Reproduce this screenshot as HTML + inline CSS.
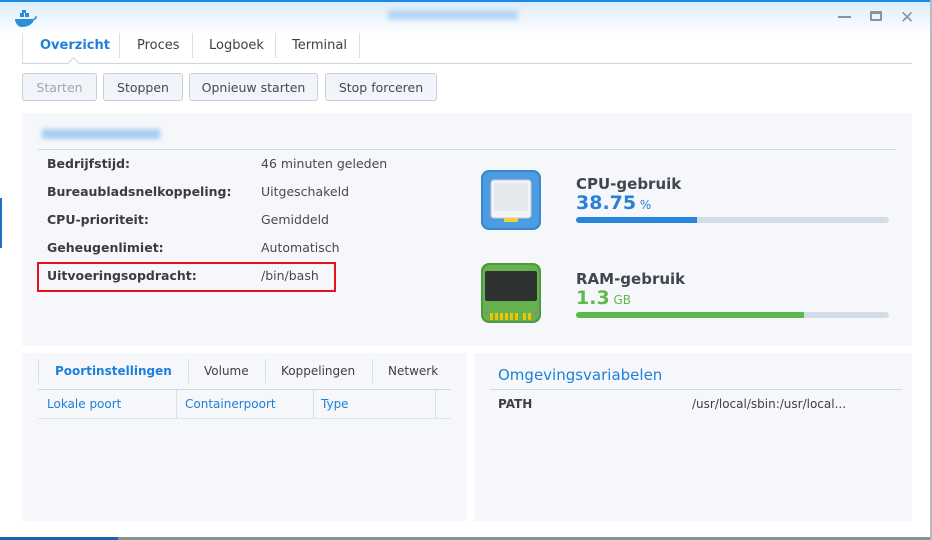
<!DOCTYPE html>
<html><head><meta charset="utf-8"><style>
*{margin:0;padding:0;box-sizing:border-box}
body{width:932px;height:540px;overflow:hidden;background:#fff;font-family:"DejaVu Sans","Liberation Sans",sans-serif;font-size:12px;color:#404040;position:relative}
.a{position:absolute;white-space:nowrap}
.title{left:0;top:0;width:932px;height:34px;background:linear-gradient(#dcecfb,#fff);border-top:2px solid #1a8ae6}
.btn{position:absolute;top:73px;height:28px;background:#f1f4f8;border:1px solid #c6d0da;border-radius:3px;text-align:center;line-height:28px;font-size:12.5px;color:#404a55}
.panel{position:absolute;background:#f5f7fb}
.lbl{font-weight:bold;font-size:12.5px;color:#3c3c3c}
.val{font-size:12.5px;color:#4a4a4a}
.sep{position:absolute;width:1px;background:#d9dfe6}
</style></head><body>
<div class="a title"></div>
<svg class="a" style="left:14px;top:10px" width="24" height="18" viewBox="0 0 24 18"><path d="M1 9h19c1-3 3-3 3-3 0 3-2 4-3 4-2 5-7 7-12 7C4 17 1 13 1 9z" fill="#2b8fd9"/><rect x="6" y="3" width="4" height="4" fill="#2b8fd9"/><rect x="11" y="3" width="4" height="4" fill="#2b8fd9"/><rect x="8" y="0" width="4" height="3" fill="#2b8fd9"/></svg>
<div class="a" style="left:388px;top:10px;width:130px;height:10px;background:#b8d6f5;filter:blur(2px)"></div>
<div class="a" style="left:838px;top:16px;width:13px;height:2px;background:#8b949c"></div>
<div class="a" style="left:870px;top:11px;width:12px;height:10px;border:2px solid #8b949c;border-top-width:3px"></div>
<div class="a" style="left:900px;top:8px;font-size:17px;color:#8b949c">✕</div>
<div class="sep" style="left:22px;top:33px;height:30px"></div>
<div class="sep" style="left:119px;top:33px;height:25px"></div>
<div class="sep" style="left:192px;top:33px;height:25px"></div>
<div class="sep" style="left:275px;top:33px;height:25px"></div>
<div class="sep" style="left:359px;top:33px;height:25px"></div>
<div class="a" style="left:22px;top:63px;width:890px;height:1px;background:#cfd5db"></div>
<div class="a" style="left:40px;top:38px;font-size:13px;font-weight:bold;color:#1e80d8">Overzicht</div>
<div class="a" style="left:137px;top:38px;font-size:13px">Proces</div>
<div class="a" style="left:209px;top:38px;font-size:13px">Logboek</div>
<div class="a" style="left:292px;top:38px;font-size:13px">Terminal</div>
<div class="a" style="left:69px;top:59px;width:9px;height:9px;background:#fff;border-left:1px solid #cfd5db;border-top:1px solid #cfd5db;transform:rotate(45deg)"></div>
<div class="btn" style="left:22px;width:75px;color:#a0a8b0">Starten</div>
<div class="btn" style="left:103px;width:80px">Stoppen</div>
<div class="btn" style="left:189px;width:129px">Opnieuw starten</div>
<div class="btn" style="left:325px;width:112px">Stop forceren</div>

<div class="panel" style="left:22px;top:113px;width:890px;height:233px"></div>
<div class="a" style="left:42px;top:129px;width:118px;height:10px;background:#a9cdf2;filter:blur(2px)"></div>
<div class="a" style="left:38px;top:149px;width:858px;height:1px;background:#d4d9df"></div>
<div class="a lbl" style="left:47px;top:156px">Bedrijfstijd:</div><div class="a val" style="left:261px;top:156px">46 minuten geleden</div>
<div class="a lbl" style="left:47px;top:184px">Bureaubladsnelkoppeling:</div><div class="a val" style="left:261px;top:184px">Uitgeschakeld</div>
<div class="a lbl" style="left:47px;top:212px">CPU-prioriteit:</div><div class="a val" style="left:261px;top:212px">Gemiddeld</div>
<div class="a lbl" style="left:47px;top:240px">Geheugenlimiet:</div><div class="a val" style="left:261px;top:240px">Automatisch</div>
<div class="a lbl" style="left:47px;top:268px">Uitvoeringsopdracht:</div><div class="a val" style="left:261px;top:268px">/bin/bash</div>
<div class="a" style="left:37px;top:262px;width:299px;height:30px;border:2px solid #e8101a"></div>

<svg class="a" style="left:480px;top:169px" width="62" height="62" viewBox="0 0 62 62"><rect x="1" y="1" width="60" height="60" rx="8" fill="#3a86cf"/><rect x="3" y="3" width="56" height="56" rx="7" fill="#4d9be0"/><rect x="11" y="11" width="40" height="38" rx="3" fill="#f2f4f6" stroke="#c8ccd0"/><rect x="14" y="14" width="34" height="28" rx="2" fill="#e6e9ec"/><rect x="24" y="49" width="14" height="4" fill="#eed23a"/></svg>
<div class="a" style="left:576px;top:175px;font-size:15px;font-weight:bold;color:#404550">CPU-gebruik</div>
<div class="a" style="left:576px;top:192px;font-size:19px;font-weight:bold;color:#2a7fd8">38.75<span style="font-size:12px;font-weight:normal"> %</span></div>
<div class="a" style="left:576px;top:217px;width:313px;height:6px;border-radius:3px;background:#d4dde7"></div>
<div class="a" style="left:576px;top:217px;width:121px;height:6px;border-radius:3px 0 0 3px;background:#2a86dc"></div>

<svg class="a" style="left:480px;top:262px" width="62" height="62" viewBox="0 0 62 62"><rect x="1" y="1" width="60" height="60" rx="8" fill="#4e9a3c"/><rect x="3" y="3" width="56" height="56" rx="7" fill="#66b24f"/><rect x="5" y="9" width="52" height="30" rx="2" fill="#2e3230"/><g fill="#f2c400"><rect x="10" y="51" width="3" height="7"/><rect x="15" y="51" width="3" height="7"/><rect x="20" y="51" width="3" height="7"/><rect x="25" y="51" width="3" height="7"/><rect x="30" y="51" width="3" height="7"/><rect x="35" y="51" width="3" height="7"/><rect x="43" y="51" width="3" height="7"/><rect x="48" y="51" width="3" height="7"/></g><circle cx="6" cy="51" r="2" fill="#888"/><circle cx="56" cy="51" r="2" fill="#888"/></svg>
<div class="a" style="left:576px;top:270px;font-size:15px;font-weight:bold;color:#404550">RAM-gebruik</div>
<div class="a" style="left:576px;top:287px;font-size:19px;font-weight:bold;color:#5db94d">1.3<span style="font-size:12px;font-weight:normal"> GB</span></div>
<div class="a" style="left:576px;top:312px;width:313px;height:6px;border-radius:3px;background:#d4dde7"></div>
<div class="a" style="left:576px;top:312px;width:228px;height:6px;border-radius:3px 0 0 3px;background:#5db94d"></div>

<div class="panel" style="left:22px;top:353px;width:445px;height:168px"></div>
<div class="panel" style="left:474px;top:353px;width:438px;height:168px"></div>
<div class="sep" style="left:38px;top:359px;height:24px"></div>
<div class="sep" style="left:188px;top:359px;height:24px"></div>
<div class="sep" style="left:265px;top:359px;height:24px"></div>
<div class="sep" style="left:372px;top:359px;height:24px"></div>
<div class="a" style="left:55px;top:364px;font-weight:bold;color:#1e80d8">Poortinstellingen</div>
<div class="a" style="left:204px;top:364px">Volume</div>
<div class="a" style="left:281px;top:364px">Koppelingen</div>
<div class="a" style="left:388px;top:364px">Netwerk</div>
<div class="a" style="left:38px;top:389px;width:413px;height:1px;background:#d4d9df"></div>
<div class="a" style="left:38px;top:418px;width:413px;height:1px;background:#e1e5ea"></div>
<div class="sep" style="left:176px;top:390px;height:28px"></div>
<div class="sep" style="left:313px;top:390px;height:28px"></div>
<div class="sep" style="left:435px;top:390px;height:28px"></div>
<div class="a" style="left:47px;top:397px;color:#1e80d8">Lokale poort</div>
<div class="a" style="left:185px;top:397px;color:#1e80d8">Containerpoort</div>
<div class="a" style="left:321px;top:397px;color:#1e80d8">Type</div>
<div class="a" style="left:498px;top:366px;font-size:15px;color:#1e80d8">Omgevingsvariabelen</div>
<div class="a" style="left:490px;top:389px;width:412px;height:1px;background:#d4d9df"></div>
<div class="a" style="left:498px;top:397px;font-weight:bold">PATH</div>
<div class="a" style="left:692px;top:397px">/usr/local/sbin:/usr/local...</div>

<div class="a" style="left:0;top:537px;width:932px;height:3px;background:#8a9096"></div>
<div class="a" style="left:0;top:537px;width:118px;height:3px;background:#1e5fb0"></div>
<div class="a" style="left:930px;top:0;width:2px;height:540px;background:#b8bcc0"></div>
<div class="a" style="left:0;top:198px;width:2px;height:50px;background:#1e6fc8"></div>
</body></html>
